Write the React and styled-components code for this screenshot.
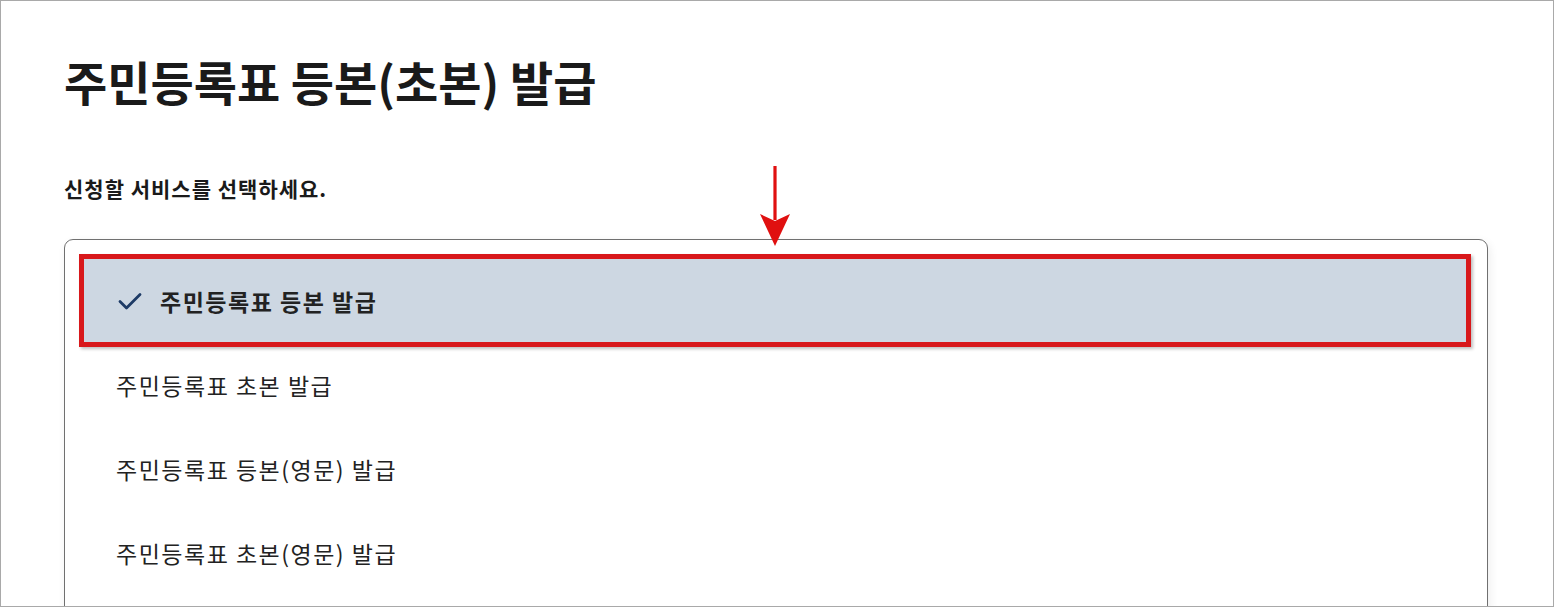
import styled, { createGlobalStyle } from "styled-components";

const GlobalStyle = createGlobalStyle`
  html, body {
    margin: 0;
    padding: 0;
    background: #ffffff;
  }
  body {
    font-family: "Noto Sans CJK KR", "Noto Sans", sans-serif;
    color: #1e1e1e;
  }
`;

const services = [
  "주민등록표 등본 발급",
  "주민등록표 초본 발급",
  "주민등록표 등본(영문) 발급",
  "주민등록표 초본(영문) 발급",
];

const Check = () => (
  <svg width="24" height="18" viewBox="0 0 24 18">
    <path
      d="M2 9.5 L8.5 16 L22 2.5"
      fill="none"
      stroke="#1d3b66"
      strokeWidth="2.8"
      strokeLinecap="round"
      strokeLinejoin="round"
    />
  </svg>
);

const DownArrow = () => (
  <svg width="32" height="80" viewBox="0 0 32 80">
    <line x1="16" y1="0" x2="16" y2="54" stroke="#e01010" strokeWidth="3.2" />
    <path d="M1 48 L16 55 L31 48 L16 80 Z" fill="#e01010" />
  </svg>
);

const App = () => {
  const selected = 0;
  return (
    <>
      <GlobalStyle />
      <Frame>
        <Title>주민등록표 등본(초본) 발급</Title>
        <Label>신청할 서비스를 선택하세요.</Label>
        <ListWrap>
          <ArrowMark>
            <DownArrow />
          </ArrowMark>
          <OptionList>
            {services.map((name, i) => (
              <Option key={name} $active={i === selected}>
                {i === selected && (
                  <CheckBox>
                    <Check />
                  </CheckBox>
                )}
                {name}
              </Option>
            ))}
          </OptionList>
        </ListWrap>
      </Frame>
    </>
  );
};
export default App;

const Frame = styled.div`
  box-sizing: border-box;
  height: 100vh;
  overflow: hidden;
  border: 1px solid #a9a9a9;
  padding: 0 65px 0 63px;
`;

const Title = styled.h1`
  margin: 0;
  padding-top: 48px;
  font-size: 47px;
  line-height: 64px;
  font-weight: 700;
  letter-spacing: 0;
  color: #1a1a1a;
`;

const Label = styled.p`
  margin: 0;
  padding-top: 61px;
  font-size: 21px;
  line-height: 28px;
  font-weight: 700;
  letter-spacing: 1px;
  color: #1a1a1a;
`;

const ListWrap = styled.div`
  position: relative;
  margin-top: 37px;
`;

const ArrowMark = styled.div`
  position: absolute;
  left: 695px;
  top: -73px;
  z-index: 2;
  line-height: 0;
`;

const OptionList = styled.ul`
  list-style: none;
  margin: 0;
  padding: 14px 16px 20px 14px;
  border: 1px solid #707070;
  border-radius: 9px;
  box-shadow: 2px 3px 10px rgba(0, 0, 0, 0.07);
  background: #fff;
`;

const Option = styled.li`
  box-sizing: border-box;
  display: flex;
  align-items: center;
  height: ${(p) => (p.$active ? "93px" : "84px")};
  margin-bottom: ${(p) => (p.$active ? "-4px" : "0")};
  padding-left: ${(p) => (p.$active ? "34px" : "37px")};
  font-size: 23px;
  letter-spacing: 1.5px;
  font-weight: ${(p) => (p.$active ? 700 : 400)};
  color: #222;
  background: ${(p) => (p.$active ? "#cdd7e2" : "transparent")};
  border: ${(p) => (p.$active ? "5px solid #d8181b" : "none")};
  box-shadow: ${(p) => (p.$active ? "2px 2px 3px rgba(0, 0, 0, 0.25)" : "none")};
`;

const CheckBox = styled.span`
  display: inline-flex;
  margin-right: 18px;
  line-height: 0;
`;
